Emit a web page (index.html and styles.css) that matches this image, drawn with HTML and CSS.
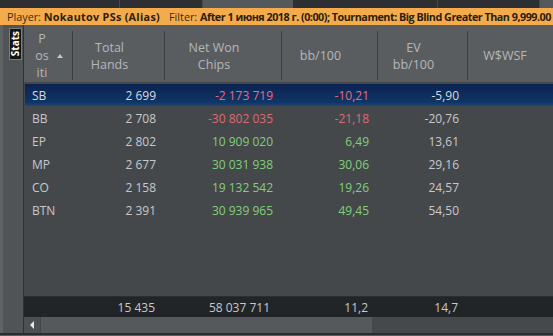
FILE: index.html
```html
<!DOCTYPE html>
<html>
<head>
<meta charset="utf-8">
<link rel="stylesheet" href="styles.css">
</head>
<body>
<div class="tabs">
  <div class="tab dark w120"></div>
  <div class="tab dark w83"></div>
  <div class="tab light w90"></div>
  <div class="tab dark w145"></div>
  <div class="tab dark w102"></div>
  <div class="tab light grow"></div>
</div>
<div class="filterbar"><span class="lbl">Player:</span> <b class="who">Nokautov PSs (Alias)</b><span class="lbl gap">Filter:</span> <b class="flt">After 1 июня 2018 г. (0:00); Tournament: Big Blind Greater Than 9,999.00</b></div>
<div class="main">
  <div class="side"><div class="stats-tab"><span>Stats</span></div></div>
  <div class="grid">
    <div class="head">
      <div class="hc c1"><div class="ptext"><span>P</span><span>os</span><span>iti</span></div><div class="arrow"></div></div>
      <div class="hc c2"><span>Total</span><span>Hands</span></div>
      <div class="hc c3"><span>Net Won</span><span>Chips</span></div>
      <div class="hc c4"><span>bb/100</span></div>
      <div class="hc c5"><span>EV</span><span>bb/100</span></div>
      <div class="hc c6"><span>W$WSF</span></div>
    </div>
    <div class="body">
      <div class="row sel"><div class="c1 l">SB</div><div class="c2 r">2 699</div><div class="c3 r neg">-2 173 719</div><div class="c4 r neg">-10,21</div><div class="c5 r">-5,90</div></div>
      <div class="row"><div class="c1 l">BB</div><div class="c2 r">2 708</div><div class="c3 r neg">-30 802 035</div><div class="c4 r neg">-21,18</div><div class="c5 r">-20,76</div></div>
      <div class="row"><div class="c1 l">EP</div><div class="c2 r">2 802</div><div class="c3 r pos">10 909 020</div><div class="c4 r pos">6,49</div><div class="c5 r">13,61</div></div>
      <div class="row"><div class="c1 l">MP</div><div class="c2 r">2 677</div><div class="c3 r pos">30 031 938</div><div class="c4 r pos">30,06</div><div class="c5 r">29,16</div></div>
      <div class="row"><div class="c1 l">CO</div><div class="c2 r">2 158</div><div class="c3 r pos">19 132 542</div><div class="c4 r pos">19,26</div><div class="c5 r">24,57</div></div>
      <div class="row"><div class="c1 l">BTN</div><div class="c2 r">2 391</div><div class="c3 r pos">30 939 965</div><div class="c4 r pos">49,45</div><div class="c5 r">54,50</div></div>
    </div>
    <div class="foot">
      <div class="c1"></div><div class="c2 r">15 435</div><div class="c3 r">58 037 711</div><div class="c4 r">11,2</div><div class="c5 r">14,7</div>
    </div>
    <div class="scroll">
      <div class="sbtn"><div class="larrow"></div></div>
      <div class="thumb"></div>
      <div class="track"></div>
    </div>
  </div>
</div>
<div class="bottom"></div>
</body>
</html>
```

FILE: styles.css
```css
* { box-sizing: border-box; }
html, body { margin: 0; padding: 0; }
body {
  width: 553px;
  height: 336px;
  overflow: hidden;
  background: #505356;
  font-family: "Open Sans", "Noto Sans", sans-serif;
  display: flex;
  flex-direction: column;
}
.tabs { height: 8px; display: flex; flex: none; }
.tab { height: 8px; }
.tab.dark { background: #2d2f32; border-right: 1px solid #45484b; }
.tab.light { background: #56595c; }
.w120 { width: 120px; }
.w83 { width: 83px; }
.w90 { width: 90px; }
.w145 { width: 145px; }
.w102 { width: 102px; }
.grow { flex: 1; }

.filterbar {
  height: 17px;
  flex: none;
  background: #f4ab4c;
  color: #2b2010;
  font-size: 10.8px;
  line-height: 17px;
  padding-left: 7px;
  white-space: nowrap;
  overflow: hidden;
}
.filterbar .lbl { color: #3a2c14; }
.filterbar .gap { margin-left: 9px; }
.filterbar b { font-weight: 700; }
.filterbar .who { letter-spacing: 0.3px; }
.filterbar .flt { letter-spacing: -0.5px; }

.main { display: flex; height: 308px; flex: none; }
.side {
  width: 24px;
  flex: none;
  background: #515457;
  border-left: 3px solid #606366;
  border-right: 1px solid #2e3134;
  padding: 3px 0 0 6px;
}
.stats-tab {
  width: 13px;
  height: 32px;
  background: #141516;
  border: 1px solid #7a7d80;
  display: flex;
  align-items: center;
  justify-content: center;
}
.stats-tab span {
  writing-mode: vertical-rl;
  transform: rotate(180deg);
  color: #ffffff;
  font-weight: 700;
  font-size: 10px;
  line-height: 11px;
}

.grid { flex: 1; display: flex; flex-direction: column; overflow: hidden; background: #45484b; }
.c1 { width: 49px; flex: none; }
.c2 { width: 92px; flex: none; }
.c3 { width: 117px; flex: none; }
.c4 { width: 96px; flex: none; }
.c5 { width: 90px; flex: none; }
.c6 { width: 124px; flex: none; }

.head {
  height: 57px;
  flex: none;
  display: flex;
  background: #5a5d60;
  padding: 6px 0 2px;
  color: #b4b7ba;
  font-size: 12.5px;
  line-height: 17px;
}
.hc {
  display: flex;
  flex-direction: column;
  align-items: center;
  justify-content: center;
  border-right: 1px solid #3b3e41;
  padding-right: 18px;
}
.hc.c6 { border-right: none; padding-right: 50px; }
.hc.c1 { flex-direction: row; padding-right: 0; justify-content: flex-start; }
.ptext { display: flex; flex-direction: column; align-items: center; width: 36px; }
.arrow {
  width: 0; height: 0;
  border-left: 3.5px solid transparent;
  border-right: 3.5px solid transparent;
  border-bottom: 4px solid #c4c7ca;
  margin-left: -3px;
  margin-top: 1px;
}

.body { flex: 1; padding-top: 2px; }
.row {
  display: flex;
  height: 23px;
  align-items: center;
  color: #c6c8cb;
  font-size: 12px;
  margin-left: 1px;
}
.row.sel {
  background: linear-gradient(#0a2250, #103666 85%, #1b4a80);
  color: #d8dadd;
  height: 22px;
  margin-bottom: 1px;
}
.row .c1 { width: 48px; }
.l { padding-left: 7px; }
.r { text-align: right; padding-right: 9px; }
.neg { color: #de6a72; }
.sel .neg { color: #ea6a80; }
.pos { color: #80cf7b; }

.foot {
  height: 21px;
  flex: none;
  display: flex;
  align-items: center;
  background: #222528;
  color: #c6c8cb;
  font-size: 12px;
  border-top: 1px solid #2b2e31;
}
.foot .c2 { padding-right: 10px; }
.foot .c3 { padding-right: 12px; }
.foot .c4 { padding-right: 10px; }
.foot .c5 { padding-right: 10px; }

.scroll {
  height: 16px;
  flex: none;
  display: flex;
  background: #46494c;
}
.sbtn {
  width: 17px;
  background: #4d5053;
  border-right: 1px solid #43464a;
  display: flex;
  align-items: center;
  justify-content: center;
}
.larrow {
  width: 0; height: 0;
  border-top: 4px solid transparent;
  border-bottom: 4px solid transparent;
  border-right: 4px solid #e8e8e8;
}
.thumb { width: 331px; background: #55595c; }
.track { flex: 1; background: #46494c; }
.bottom { height: 3px; flex: none; background: #2a2c2e; border-bottom: 1px solid #5a5d60; }
```
